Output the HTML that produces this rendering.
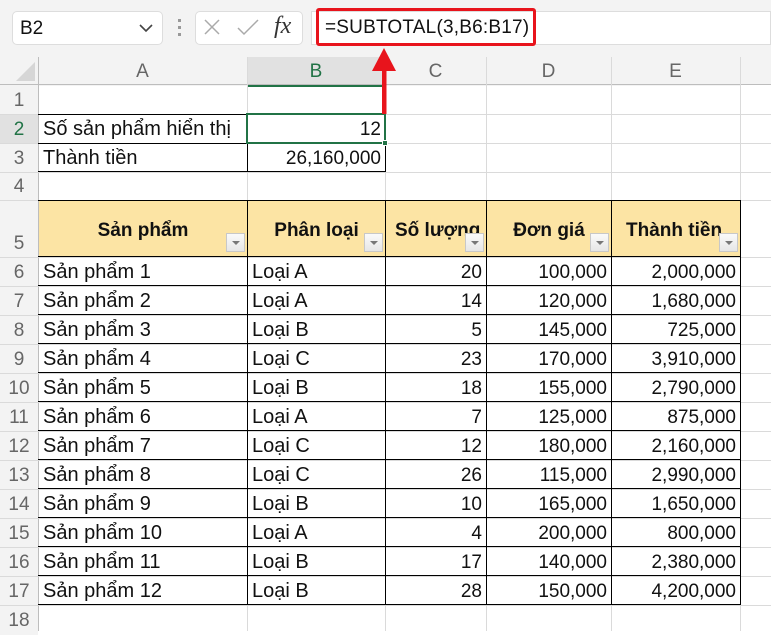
<!DOCTYPE html>
<html><head><meta charset="utf-8"><style>
*{margin:0;padding:0;box-sizing:border-box}
body{width:771px;height:631px;overflow:hidden;background:#fff;font-family:"Liberation Sans",sans-serif;position:relative}
.a{position:absolute}
.c{position:absolute;font-size:19px;color:#111;white-space:nowrap;overflow:visible;padding:1px 4px 0}
.t{font-size:20px}
.r{text-align:right}
.hd{position:absolute;background:#f3f3f3;color:#666;font-size:19px;text-align:center;padding-top:1px}
.vl{position:absolute;width:1px;background:#dadada}
.hl{position:absolute;height:1px;background:#dadada}
.bh{position:absolute;height:1px;background:#000}
.bv{position:absolute;width:1px;background:#000}
.th{position:absolute;background:#fce4a4;font-weight:bold;font-size:19px;text-align:center;color:#111;padding-top:3px}
.dd{position:absolute;width:19px;height:19px;border:1px solid #c8c8c8;background:linear-gradient(#fafafa,#e6e6e6)}
.dd:after{content:"";position:absolute;left:5px;top:7px;border-left:4px solid transparent;border-right:4px solid transparent;border-top:4px solid #777}
</style></head><body>
<div class="a" style="left:0;top:0;width:771px;height:57px;background:#f3f3f3"></div>
<div class="a" style="left:12px;top:11px;width:151px;height:34px;background:#fff;border:1px solid #ddd;border-radius:5px"></div>
<div class="c" style="left:16px;top:11px;line-height:34px;font-size:19px">B2</div>
<svg class="a" style="left:138px;top:22px" width="16" height="12"><path d="M2 3 L8 9 L14 3" stroke="#444" stroke-width="1.6" fill="none"/></svg>
<div class="a" style="left:178px;top:19px;width:3px;height:3px;background:#999"></div>
<div class="a" style="left:178px;top:26px;width:3px;height:3px;background:#999"></div>
<div class="a" style="left:178px;top:33px;width:3px;height:3px;background:#999"></div>
<div class="a" style="left:195px;top:11px;width:108px;height:34px;background:#fff;border:1px solid #ddd;border-radius:5px"></div>
<svg class="a" style="left:200px;top:16px" width="70" height="26"><path d="M5 4 L19 18 M19 4 L5 18" stroke="#aaa" stroke-width="1.5"/><path d="M38 12 L44 18 L58 4" stroke="#aaa" stroke-width="1.5" fill="none"/></svg>
<div class="a" style="left:274px;top:13px;font-family:'Liberation Serif',serif;font-style:italic;font-size:24px;color:#333">fx</div>
<div class="a" style="left:311px;top:11px;width:460px;height:34px;background:#fff;border:1px solid #ddd"></div>
<div class="a" style="left:316px;top:8px;width:220px;height:38px;border:3px solid #e8141c;border-radius:3px"></div>
<div class="c" style="left:321px;top:10px;line-height:34px;font-size:19px;letter-spacing:0.2px">=SUBTOTAL(3,B6:B17)</div>
<div class="hd" style="left:0;top:57px;width:771px;height:28px"></div>
<svg class="a" style="left:14px;top:60px" width="22" height="22"><path d="M21 2 L21 21 L2 21 Z" fill="#d6d6d6"/></svg>
<div class="hd" style="left:38px;top:57px;width:209px;line-height:28px">A</div>
<div class="hd" style="left:247px;top:57px;width:138px;line-height:27px;background:#e1e1e1;color:#217346;border-bottom:2px solid #217346">B</div>
<div class="hd" style="left:385px;top:57px;width:101px;line-height:28px">C</div>
<div class="hd" style="left:486px;top:57px;width:125px;line-height:28px">D</div>
<div class="hd" style="left:611px;top:57px;width:129px;line-height:28px">E</div>
<div class="hl" style="left:0;top:84px;width:771px;background:#bdbdbd"></div>
<div class="hd" style="left:0;top:85px;width:38px;height:546px"></div>
<div class="vl" style="left:38px;top:57px;height:574px;background:#bdbdbd"></div>
<div class="hd" style="left:0;top:85px;width:38px;line-height:29px">1</div>
<div class="hd" style="left:0;top:114px;width:38px;line-height:29px;background:#e1e1e1;color:#217346">2</div>
<div class="hd" style="left:0;top:143px;width:38px;line-height:29px">3</div>
<div class="hd" style="left:0;top:172px;width:38px;line-height:28px">4</div>
<div class="hd" style="left:0;top:200px;width:38px;line-height:86px">5</div>
<div class="hd" style="left:0;top:257px;width:38px;line-height:29px">6</div>
<div class="hd" style="left:0;top:286px;width:38px;line-height:29px">7</div>
<div class="hd" style="left:0;top:315px;width:38px;line-height:29px">8</div>
<div class="hd" style="left:0;top:344px;width:38px;line-height:29px">9</div>
<div class="hd" style="left:0;top:373px;width:38px;line-height:29px">10</div>
<div class="hd" style="left:0;top:402px;width:38px;line-height:29px">11</div>
<div class="hd" style="left:0;top:431px;width:38px;line-height:29px">12</div>
<div class="hd" style="left:0;top:460px;width:38px;line-height:29px">13</div>
<div class="hd" style="left:0;top:489px;width:38px;line-height:29px">14</div>
<div class="hd" style="left:0;top:518px;width:38px;line-height:29px">15</div>
<div class="hd" style="left:0;top:547px;width:38px;line-height:29px">16</div>
<div class="hd" style="left:0;top:576px;width:38px;line-height:29px">17</div>
<div class="hd" style="left:0;top:605px;width:38px;line-height:29px">18</div>
<div class="vl" style="left:247px;top:57px;height:574px"></div>
<div class="vl" style="left:385px;top:57px;height:574px"></div>
<div class="vl" style="left:486px;top:57px;height:574px"></div>
<div class="vl" style="left:611px;top:57px;height:574px"></div>
<div class="vl" style="left:740px;top:57px;height:574px"></div>
<div class="hl" style="left:0;top:114px;width:771px"></div>
<div class="hl" style="left:0;top:143px;width:771px"></div>
<div class="hl" style="left:0;top:172px;width:771px"></div>
<div class="hl" style="left:0;top:200px;width:771px"></div>
<div class="hl" style="left:0;top:257px;width:771px"></div>
<div class="hl" style="left:0;top:286px;width:771px"></div>
<div class="hl" style="left:0;top:315px;width:771px"></div>
<div class="hl" style="left:0;top:344px;width:771px"></div>
<div class="hl" style="left:0;top:373px;width:771px"></div>
<div class="hl" style="left:0;top:402px;width:771px"></div>
<div class="hl" style="left:0;top:431px;width:771px"></div>
<div class="hl" style="left:0;top:460px;width:771px"></div>
<div class="hl" style="left:0;top:489px;width:771px"></div>
<div class="hl" style="left:0;top:518px;width:771px"></div>
<div class="hl" style="left:0;top:547px;width:771px"></div>
<div class="hl" style="left:0;top:576px;width:771px"></div>
<div class="hl" style="left:0;top:605px;width:771px"></div>
<div class="th" style="left:39px;top:201px;width:208px;height:56px;line-height:53px">Sản phẩm</div>
<div class="th" style="left:248px;top:201px;width:137px;height:56px;line-height:53px">Phân loại</div>
<div class="th" style="left:386px;top:201px;width:100px;height:56px;line-height:53px;overflow:hidden;text-align:left;padding-left:9px">Số lượng</div>
<div class="th" style="left:487px;top:201px;width:124px;height:56px;line-height:53px">Đơn giá</div>
<div class="th" style="left:612px;top:201px;width:128px;height:56px;line-height:53px;text-align:left;padding-left:14px">Thành tiền</div>
<div class="dd" style="left:226px;top:233px"></div>
<div class="dd" style="left:364px;top:233px"></div>
<div class="dd" style="left:465px;top:233px"></div>
<div class="dd" style="left:590px;top:233px"></div>
<div class="dd" style="left:719px;top:233px"></div>
<div class="bh" style="left:38px;top:114px;width:348px"></div>
<div class="bh" style="left:38px;top:143px;width:348px"></div>
<div class="bh" style="left:38px;top:171px;width:348px"></div>
<div class="bv" style="left:247px;top:114px;height:58px"></div>
<div class="bv" style="left:385px;top:143px;height:29px"></div>
<div class="bh" style="left:38px;top:200px;width:703px"></div>
<div class="bh" style="left:38px;top:256px;width:703px"></div>
<div class="bh" style="left:38px;top:285px;width:703px"></div>
<div class="bh" style="left:38px;top:314px;width:703px"></div>
<div class="bh" style="left:38px;top:343px;width:703px"></div>
<div class="bh" style="left:38px;top:372px;width:703px"></div>
<div class="bh" style="left:38px;top:401px;width:703px"></div>
<div class="bh" style="left:38px;top:430px;width:703px"></div>
<div class="bh" style="left:38px;top:459px;width:703px"></div>
<div class="bh" style="left:38px;top:488px;width:703px"></div>
<div class="bh" style="left:38px;top:517px;width:703px"></div>
<div class="bh" style="left:38px;top:546px;width:703px"></div>
<div class="bh" style="left:38px;top:575px;width:703px"></div>
<div class="bh" style="left:38px;top:604px;width:703px"></div>
<div class="bv" style="left:247px;top:200px;height:405px"></div>
<div class="bv" style="left:385px;top:200px;height:405px"></div>
<div class="bv" style="left:486px;top:200px;height:405px"></div>
<div class="bv" style="left:611px;top:200px;height:405px"></div>
<div class="bv" style="left:740px;top:200px;height:405px"></div>
<div class="a" style="left:246px;top:113px;width:140px;height:31px;border:2px solid #217346"></div>
<div class="a" style="left:382px;top:140px;width:6px;height:6px;background:#217346;border:1px solid #fff"></div>
<div class="c t" style="left:39px;top:114px;line-height:29px">Số sản phẩm hiển thị</div>
<div class="c r" style="left:248px;top:114px;width:137px;line-height:29px">12</div>
<div class="c t" style="left:39px;top:143px;line-height:29px">Thành tiền</div>
<div class="c r" style="left:248px;top:143px;width:137px;line-height:29px">26,160,000</div>
<div class="c t" style="left:39px;top:257px;line-height:29px">Sản phẩm 1</div><div class="c t" style="left:248px;top:257px;line-height:29px">Loại A</div><div class="c r" style="left:386px;top:257px;width:100px;line-height:29px">20</div><div class="c r" style="left:487px;top:257px;width:124px;line-height:29px">100,000</div><div class="c r" style="left:612px;top:257px;width:128px;line-height:29px">2,000,000</div>
<div class="c t" style="left:39px;top:286px;line-height:29px">Sản phẩm 2</div><div class="c t" style="left:248px;top:286px;line-height:29px">Loại A</div><div class="c r" style="left:386px;top:286px;width:100px;line-height:29px">14</div><div class="c r" style="left:487px;top:286px;width:124px;line-height:29px">120,000</div><div class="c r" style="left:612px;top:286px;width:128px;line-height:29px">1,680,000</div>
<div class="c t" style="left:39px;top:315px;line-height:29px">Sản phẩm 3</div><div class="c t" style="left:248px;top:315px;line-height:29px">Loại B</div><div class="c r" style="left:386px;top:315px;width:100px;line-height:29px">5</div><div class="c r" style="left:487px;top:315px;width:124px;line-height:29px">145,000</div><div class="c r" style="left:612px;top:315px;width:128px;line-height:29px">725,000</div>
<div class="c t" style="left:39px;top:344px;line-height:29px">Sản phẩm 4</div><div class="c t" style="left:248px;top:344px;line-height:29px">Loại C</div><div class="c r" style="left:386px;top:344px;width:100px;line-height:29px">23</div><div class="c r" style="left:487px;top:344px;width:124px;line-height:29px">170,000</div><div class="c r" style="left:612px;top:344px;width:128px;line-height:29px">3,910,000</div>
<div class="c t" style="left:39px;top:373px;line-height:29px">Sản phẩm 5</div><div class="c t" style="left:248px;top:373px;line-height:29px">Loại B</div><div class="c r" style="left:386px;top:373px;width:100px;line-height:29px">18</div><div class="c r" style="left:487px;top:373px;width:124px;line-height:29px">155,000</div><div class="c r" style="left:612px;top:373px;width:128px;line-height:29px">2,790,000</div>
<div class="c t" style="left:39px;top:402px;line-height:29px">Sản phẩm 6</div><div class="c t" style="left:248px;top:402px;line-height:29px">Loại A</div><div class="c r" style="left:386px;top:402px;width:100px;line-height:29px">7</div><div class="c r" style="left:487px;top:402px;width:124px;line-height:29px">125,000</div><div class="c r" style="left:612px;top:402px;width:128px;line-height:29px">875,000</div>
<div class="c t" style="left:39px;top:431px;line-height:29px">Sản phẩm 7</div><div class="c t" style="left:248px;top:431px;line-height:29px">Loại C</div><div class="c r" style="left:386px;top:431px;width:100px;line-height:29px">12</div><div class="c r" style="left:487px;top:431px;width:124px;line-height:29px">180,000</div><div class="c r" style="left:612px;top:431px;width:128px;line-height:29px">2,160,000</div>
<div class="c t" style="left:39px;top:460px;line-height:29px">Sản phẩm 8</div><div class="c t" style="left:248px;top:460px;line-height:29px">Loại C</div><div class="c r" style="left:386px;top:460px;width:100px;line-height:29px">26</div><div class="c r" style="left:487px;top:460px;width:124px;line-height:29px">115,000</div><div class="c r" style="left:612px;top:460px;width:128px;line-height:29px">2,990,000</div>
<div class="c t" style="left:39px;top:489px;line-height:29px">Sản phẩm 9</div><div class="c t" style="left:248px;top:489px;line-height:29px">Loại B</div><div class="c r" style="left:386px;top:489px;width:100px;line-height:29px">10</div><div class="c r" style="left:487px;top:489px;width:124px;line-height:29px">165,000</div><div class="c r" style="left:612px;top:489px;width:128px;line-height:29px">1,650,000</div>
<div class="c t" style="left:39px;top:518px;line-height:29px">Sản phẩm 10</div><div class="c t" style="left:248px;top:518px;line-height:29px">Loại A</div><div class="c r" style="left:386px;top:518px;width:100px;line-height:29px">4</div><div class="c r" style="left:487px;top:518px;width:124px;line-height:29px">200,000</div><div class="c r" style="left:612px;top:518px;width:128px;line-height:29px">800,000</div>
<div class="c t" style="left:39px;top:547px;line-height:29px">Sản phẩm 11</div><div class="c t" style="left:248px;top:547px;line-height:29px">Loại B</div><div class="c r" style="left:386px;top:547px;width:100px;line-height:29px">17</div><div class="c r" style="left:487px;top:547px;width:124px;line-height:29px">140,000</div><div class="c r" style="left:612px;top:547px;width:128px;line-height:29px">2,380,000</div>
<div class="c t" style="left:39px;top:576px;line-height:29px">Sản phẩm 12</div><div class="c t" style="left:248px;top:576px;line-height:29px">Loại B</div><div class="c r" style="left:386px;top:576px;width:100px;line-height:29px">28</div><div class="c r" style="left:487px;top:576px;width:124px;line-height:29px">150,000</div><div class="c r" style="left:612px;top:576px;width:128px;line-height:29px">4,200,000</div>
<svg class="a" style="left:368px;top:44px" width="34" height="72"><path d="M16 4 L4 27 L28 27 Z" fill="#e8141c"/><rect x="14" y="24" width="4.5" height="46" fill="#e8141c"/></svg>
</body></html>
